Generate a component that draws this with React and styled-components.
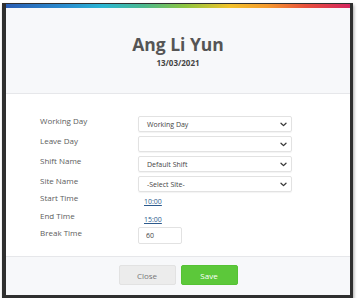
import styled, { createGlobalStyle } from "styled-components";

const GlobalStyle = createGlobalStyle`
    html, body {
        margin: 0;
        padding: 0;
        background: #fff;
    }
    body {
        font-family: "Open Sans", "Noto Sans", Arial, sans-serif;
        -webkit-font-smoothing: antialiased;
    }
`

const fields = [
    { label: 'Working Day', type: 'select', value: 'Working Day' },
    { label: 'Leave Day', type: 'select', value: '' },
    { label: 'Shift Name', type: 'select', value: 'Default Shift' },
    { label: 'Site Name', type: 'select', value: '-Select Site-' },
    { label: 'Start Time', type: 'link', value: '10:00', mt: 1 },
    { label: 'End Time', type: 'link', value: '15:00', mt: 4 },
    { label: 'Break Time', type: 'input', value: '60', mt: 3 },
]

const Chevron = () => (
    <svg width="7" height="5" viewBox="0 0 7 5">
        <path d="M1 1.2 L3.5 3.6 L6 1.2" fill="none" stroke="#3a3a3a" strokeWidth="1.3" strokeLinecap="round" strokeLinejoin="round" />
    </svg>
)

const App = () => {
    return (
        <>
            <GlobalStyle />
            <Frame>
                <Rainbow />
                <Header>
                    <Title>Ang Li Yun</Title>
                    <DateText>13/03/2021</DateText>
                </Header>
                <Body>
                    {fields.map((f, i) => (
                        <Row key={f.label} $mt={i === 0 ? 0 : (f.mt ?? 4)}>
                            <Label>{f.label}</Label>
                            {f.type === 'select' && (
                                <SelectBox>
                                    <span>{f.value}</span>
                                    <Chevron />
                                </SelectBox>
                            )}
                            {f.type === 'link' && <TimeLink href="#">{f.value}</TimeLink>}
                            {f.type === 'input' && <NumberInput defaultValue={f.value} />}
                        </Row>
                    ))}
                </Body>
                <Footer>
                    <Button>Close</Button>
                    <Button $primary>Save</Button>
                </Footer>
            </Frame>
        </>
    )
}

const Frame = styled.div`
    margin: 3px 0 0 2px;
    width: 344px;
    border-style: solid;
    border-color: #2f2f2f;
    border-width: 1px 3px 3px 4px;
    box-shadow: 1px 2px 3px rgba(0, 0, 0, 0.35);
    background: #fff;
`
const Rainbow = styled.div`
    height: 4px;
    background: linear-gradient(to right,
        #2a5db3 0%,
        #2a8fd0 18%,
        #2ab6d4 28%,
        #4cb98e 40%,
        #8dc540 52%,
        #f2c22a 65%,
        #f59a2e 76%,
        #e8503c 87%,
        #d4265f 100%);
`
const Header = styled.div`
    height: 61px;
    padding-top: 24px;
    background: #f7f8fa;
    border-bottom: 1px solid #e6e7ea;
    display: flex;
    flex-direction: column;
    align-items: center;
`
const Title = styled.h2`
    margin: 0;
    font-size: 17.5px;
    line-height: 24px;
    font-weight: 700;
    color: #555;
`
const DateText = styled.div`
    margin-top: 1px;
    font-size: 8px;
    line-height: 12px;
    font-weight: 700;
    color: #444;
`
const Body = styled.div`
    padding: 22px 0 12px 34px;
    display: flex;
    flex-direction: column;
`
const Row = styled.div`
    display: grid;
    grid-template-columns: 98px 154px;
    align-items: start;
    margin-top: ${p => p.$mt}px;
`
const Label = styled.div`
    font-size: 8px;
    line-height: 10px;
    color: #5c5c5c;
`
const SelectBox = styled.div`
    height: 16px;
    box-sizing: border-box;
    display: flex;
    align-items: center;
    justify-content: space-between;
    padding: 0 4px 0 8px;
    border: 1px solid #e2e2e2;
    border-radius: 2px;
    box-shadow: 0 1px 1px rgba(0, 0, 0, 0.05);
    font-size: 7px;
    color: #444;
`
const TimeLink = styled.a`
    justify-self: start;
    margin: 3px 0 0 6px;
    font-size: 7px;
    line-height: 11px;
    color: #2d5a8c;
    text-decoration: underline;
`
const NumberInput = styled.input`
    width: 44px;
    height: 17px;
    margin-top: -1px;
    box-sizing: border-box;
    padding: 0 7px;
    border: 1px solid #e2e2e2;
    border-radius: 2px;
    font-family: inherit;
    font-size: 7px;
    color: #444;
    outline: none;
`
const Footer = styled.div`
    height: 30px;
    padding-top: 8px;
    border-top: 1px solid #e6e7ea;
    background: #f7f8fa;
    display: flex;
    justify-content: center;
    gap: 5px;
`
const Button = styled.button`
    width: 57px;
    height: 20px;
    border: 1px solid ${p => p.$primary ? '#55c234' : '#e2e2e2'};
    border-radius: 2px;
    background: ${p => p.$primary ? '#5cc83a' : '#ececec'};
    color: ${p => p.$primary ? '#fff' : '#777'};
    font-family: inherit;
    font-size: 8px;
    cursor: pointer;
`

export default App;
